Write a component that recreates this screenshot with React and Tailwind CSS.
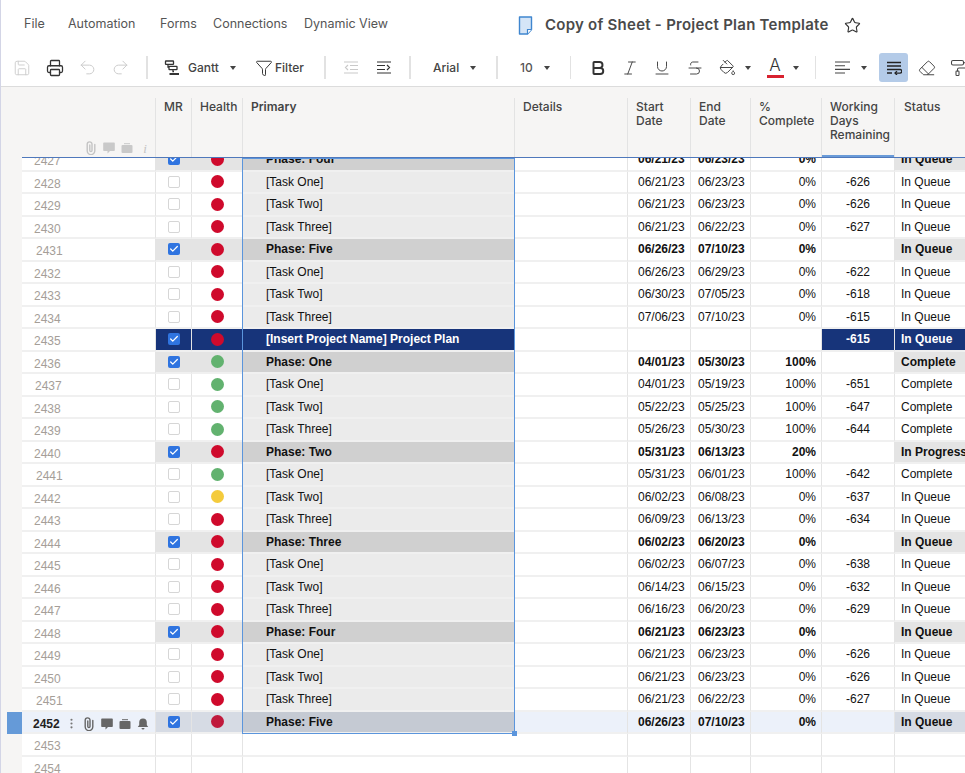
import React from 'react';
import { Save, Printer, Undo2, Redo2, Funnel, Bold, Italic, Underline, Strikethrough, PaintBucket, Eraser, PaintRoller, Star, EllipsisVertical, Check } from 'lucide-react';

const CARET = 'w-0 h-0 border-l-[3px] border-r-[3px] border-t-[4px] border-l-transparent border-r-transparent border-t-[#444]';

const R = '#cf0a2c';
const G = '#62b26f';
const Y = '#f4cb3c';

// num, title, start, end, pct, days, status, dot, kind
const rows = [
  [2427, 'Phase: Four', '06/21/23', '06/23/23', '0%', '', 'In Queue', R, 'phase'],
  [2428, '[Task One]', '06/21/23', '06/23/23', '0%', '-626', 'In Queue', R, 'task'],
  [2429, '[Task Two]', '06/21/23', '06/23/23', '0%', '-626', 'In Queue', R, 'task'],
  [2430, '[Task Three]', '06/21/23', '06/22/23', '0%', '-627', 'In Queue', R, 'task'],
  [2431, 'Phase: Five', '06/26/23', '07/10/23', '0%', '', 'In Queue', R, 'phase'],
  [2432, '[Task One]', '06/26/23', '06/29/23', '0%', '-622', 'In Queue', R, 'task'],
  [2433, '[Task Two]', '06/30/23', '07/05/23', '0%', '-618', 'In Queue', R, 'task'],
  [2434, '[Task Three]', '07/06/23', '07/10/23', '0%', '-615', 'In Queue', R, 'task'],
  [2435, '[Insert Project Name] Project Plan', '', '', '', '-615', 'In Queue', R, 'project'],
  [2436, 'Phase: One', '04/01/23', '05/30/23', '100%', '', 'Complete', G, 'phase'],
  [2437, '[Task One]', '04/01/23', '05/19/23', '100%', '-651', 'Complete', G, 'task'],
  [2438, '[Task Two]', '05/22/23', '05/25/23', '100%', '-647', 'Complete', G, 'task'],
  [2439, '[Task Three]', '05/26/23', '05/30/23', '100%', '-644', 'Complete', G, 'task'],
  [2440, 'Phase: Two', '05/31/23', '06/13/23', '20%', '', 'In Progress', R, 'phase'],
  [2441, '[Task One]', '05/31/23', '06/01/23', '100%', '-642', 'Complete', G, 'task'],
  [2442, '[Task Two]', '06/02/23', '06/08/23', '0%', '-637', 'In Queue', Y, 'task'],
  [2443, '[Task Three]', '06/09/23', '06/13/23', '0%', '-634', 'In Queue', R, 'task'],
  [2444, 'Phase: Three', '06/02/23', '06/20/23', '0%', '', 'In Queue', R, 'phase'],
  [2445, '[Task One]', '06/02/23', '06/07/23', '0%', '-638', 'In Queue', R, 'task'],
  [2446, '[Task Two]', '06/14/23', '06/15/23', '0%', '-632', 'In Queue', R, 'task'],
  [2447, '[Task Three]', '06/16/23', '06/20/23', '0%', '-629', 'In Queue', R, 'task'],
  [2448, 'Phase: Four', '06/21/23', '06/23/23', '0%', '', 'In Queue', R, 'phase'],
  [2449, '[Task One]', '06/21/23', '06/23/23', '0%', '-626', 'In Queue', R, 'task'],
  [2450, '[Task Two]', '06/21/23', '06/23/23', '0%', '-626', 'In Queue', R, 'task'],
  [2451, '[Task Three]', '06/21/23', '06/22/23', '0%', '-627', 'In Queue', R, 'task'],
  [2452, 'Phase: Five', '06/26/23', '07/10/23', '0%', '', 'In Queue', '#c01a3c', 'current'],
  [2453, '', '', '', '', '', '', null, 'empty'],
  [2454, '', '', '', '', '', '', null, 'empty'],
];

const shifted = [2431, 2441, 2451];

// the little glyphs that no package has in this shape
const GanttIcon = () => (
  <svg width="16" height="16" viewBox="0 0 16 16" fill="none" stroke="#333" strokeWidth="1.3">
    <rect x="1.5" y="1" width="8" height="3.4" rx="0.5" />
    <rect x="5" y="6.3" width="8" height="3.4" rx="0.5" />
    <path d="M4 4.4v2.6h1M9 9.7v2h1" />
    <path d="M5.5 14h9.5" strokeWidth="2" />
  </svg>
);

const IndentIcon = ({ color, back }) => (
  <svg width="14" height="13" viewBox="0 0 14 13" fill="none" stroke={color} strokeWidth="1.2">
    <path d="M0 1h14M0 12h14" />
    {back ? <path d="M6 4.500h8M6 8.500h8M4 4 1.500 6.500 4 9" /> : <path d="M0 4.500h8M0 8.500h8M10 4l2.500 2.500L10 9" />}
  </svg>
);

const WrapIcon = () => (
  <svg width="16" height="14" viewBox="0 0 16 14" fill="none" stroke="#222" strokeWidth="1.3">
    <path d="M1 1.5h14M1 5h14M1 8.5h13a1.8 1.8 0 0 1 0 3.6H9.5M1 12h5" />
    <path d="M11 10.2 9 12.1 11 14" />
  </svg>
);

const AlignIcon = () => (
  <svg width="15" height="13" viewBox="0 0 15 13" fill="none" stroke="#444" strokeWidth="1.1">
    <path d="M0 1h15M0 4.700h10M0 8.400h15M0 12h10" />
  </svg>
);

const SheetIcon = () => (
  <svg width="15" height="19" viewBox="0 0 15 19">
    <path d="M1.5 1h12v12.5L9.5 18h-8z" fill="#d5e5f7" stroke="#3f86cf" strokeWidth="1.4" strokeLinejoin="round" />
    <path d="M9.5 18v-4.500h4" fill="#fff" stroke="#3f86cf" strokeWidth="1.2" />
  </svg>
);

const ClipIcon = ({ color }) => (
  <svg width="10" height="14" viewBox="0 0 10 14" fill="none" stroke={color} strokeWidth="1.4" strokeLinecap="round">
    <path d="M8.800 3.500v6.300a3.800 3.800 0 0 1-7.600 0V3.300a2.400 2.400 0 0 1 4.800 0v6.200a1.100 1.100 0 0 1-2.200 0V4" />
  </svg>
);

const CommentIcon = ({ color }) => (
  <svg width="12" height="12" viewBox="0 0 12 12" fill={color}>
    <path d="M1 .5h10a.8.8 0 0 1 .8.8v6.900a.8.8 0 0 1-.8.8H7l-2.500 2.500V9H1a.8.8 0 0 1-.8-.8V1.300A.8.8 0 0 1 1 .5z" />
  </svg>
);

const CaseIcon = ({ color }) => (
  <svg width="12" height="12" viewBox="0 0 12 12" fill={color}>
    <path d="M3 1.200h6v1H3z" />
    <rect x="0.500" y="3" width="11" height="8" rx="1" />
  </svg>
);

const BellIcon = ({ color }) => (
  <svg width="12" height="12" viewBox="0 0 12 12" fill={color}>
    <path d="M6 .5a3.800 3.800 0 0 1 3.800 3.800V7l1.400 2H.800l1.400-2V4.300A3.800 3.800 0 0 1 6 .5zM4.500 10h3a1.500 1.500 0 0 1-3 0z" />
  </svg>
);

const Slot = ({ children }) => <div className="w-[18px] h-[14px] shrink-0 flex items-center justify-center">{children}</div>;

const Sep = ({ className }) => <div className={`h-[23px] bg-[#e2e2e2] shrink-0 ${className}`} />;
const Btn = ({ children, w = 'w-[33px]' }) => (
  <div className={`${w} h-[29px] shrink-0 flex items-center justify-center`}>{children}</div>
);
const Caret = ({ className }) => <div className={`${CARET} shrink-0 ${className}`} />;
const Label = ({ className, children }) => <span className={`text-[12px] font-medium text-[#444] shrink-0 ${className}`}>{children}</span>;

const Toolbar = () => (
  <div className="h-[40px] flex items-center pl-[4px] pt-[3px] shrink-0 overflow-hidden">
    <Btn><Save size={18} strokeWidth={1.3} color="#cfcfcf" /></Btn>
    <Btn><Printer size={18} strokeWidth={1.7} color="#333" /></Btn>
    <Btn><Undo2 size={19} strokeWidth={1.2} color="#c9c9c9" /></Btn>
    <Btn><Redo2 size={19} strokeWidth={1.2} color="#c9c9c9" /></Btn>
    <Sep className="ml-[9px] w-[2px]" />
    <div className="ml-[16px] shrink-0 flex"><GanttIcon /></div>
    <Label className="ml-[8px] w-[31px]">Gantt</Label>
    <Caret className="ml-[11px]" />
    <div className="ml-[19px] shrink-0 flex"><Funnel size={18} strokeWidth={1.3} color="#333" /></div>
    <Label className="ml-[2px] w-[29px]">Filter</Label>
    <Sep className="ml-[20px] w-[2px]" />
    <Btn w="w-[33px] ml-[8px]"><IndentIcon color="#c9c9c9" back /></Btn>
    <Btn><IndentIcon color="#333" /></Btn>
    <Sep className="ml-[9px] w-[2px]" />
    <Label className="ml-[22px] w-[27px]">Arial</Label>
    <Caret className="ml-[10px]" />
    <Sep className="ml-[20px] w-[2px]" />
    <Label className="ml-[22px] w-[15px] !text-[#555]">10</Label>
    <Caret className="ml-[9px]" />
    <Sep className="ml-[20px] w-[1px]" />
    <Btn w="w-[33px] ml-[10px]"><Bold size={18} strokeWidth={2.6} color="#333" /></Btn>
    <Btn w="w-[31px]"><Italic size={18} strokeWidth={1.3} color="#444" /></Btn>
    <Btn w="w-[33px]"><Underline size={18} strokeWidth={1.3} color="#444" /></Btn>
    <Btn w="w-[33px]"><Strikethrough size={18} strokeWidth={1.3} color="#444" /></Btn>
    <Btn w="w-[33px]"><PaintBucket size={17} strokeWidth={1.4} color="#444" /></Btn>
    <Caret className="ml-[1px]" />
    <div className="ml-[15px] shrink-0 w-[18px] flex flex-col items-center">
      <span className="text-[17px] leading-[15px] font-light text-[#333]">A</span>
      <div className="mt-[2px] w-[17px] h-[3px] bg-[#d8222f]" />
    </div>
    <Caret className="ml-[9px]" />
    <Sep className="ml-[16px] w-[1px]" />
    <div className="ml-[19px] shrink-0 flex"><AlignIcon /></div>
    <Caret className="ml-[11px]" />
    <div className="ml-[12px] w-[29px] h-[29px] shrink-0 rounded-[3px] bg-[#b4cbe8] flex items-center justify-center"><WrapIcon /></div>
    <Btn w="w-[33px] ml-[2px]"><Eraser size={18} strokeWidth={1.3} color="#444" /></Btn>
    <Btn w="w-[32px]"><PaintRoller size={18} strokeWidth={1.4} color="#444" /></Btn>
  </div>
);

const HeadCell = ({ w, children, active }) => (
  <div className={`${w} shrink-0 h-full border-l border-[#e3e3e3] pl-[8px] pt-[2px] text-[12px] leading-[14px] font-medium text-[#444] relative`}>
    {children}
    {active && <div className="absolute left-0 right-0 bottom-0 h-[3px] bg-[#6a9bd8]" />}
  </div>
);

const Header = () => (
  <div className="h-[72px] shrink-0 bg-[#f6f5f4] border-t border-[#dcdcdc] pt-[11px] relative">
    <div className="flex h-[60px]">
      <div className="w-[154px] shrink-0 relative">
        <div className="absolute right-[1px] bottom-[3px] flex items-center">
          <Slot><ClipIcon color="#c4c4c4" /></Slot>
          <Slot><CommentIcon color="#c9c9c9" /></Slot>
          <Slot><CaseIcon color="#c9c9c9" /></Slot>
          <Slot><span className="text-[13px] leading-[13px] italic text-[#c4c4c4] font-['Liberation_Serif',serif]">i</span></Slot>
        </div>
      </div>
      <HeadCell w="w-[36px]">MR</HeadCell>
      <HeadCell w="w-[51px]">Health</HeadCell>
      <HeadCell w="w-[272px]"><span className="font-semibold">Primary</span></HeadCell>
      <HeadCell w="w-[113px]">Details</HeadCell>
      <HeadCell w="w-[63px]">Start<br />Date</HeadCell>
      <HeadCell w="w-[60px]">End<br />Date</HeadCell>
      <HeadCell w="w-[71px]">%<br />Complete</HeadCell>
      <HeadCell w="w-[73px]" active>Working<br />Days<br />Remaining</HeadCell>
      <HeadCell w="w-[72px]"><span className="ml-[1px]">Status</span></HeadCell>
    </div>
    <div className="absolute left-[21px] right-0 bottom-0 h-[1px] bg-[#4f78bb]" />
  </div>
);

const numPadding = (num, current) => {
  if (current) return 'pl-[11px]';
  if (shifted.includes(num)) return 'pl-[14px]';
  if (num === 2437) return 'pl-[13px]';
  return 'pl-[12px]';
};

const Row = ({ row }) => {
  const [num, title, start, end, pct, days, status, dot, kind] = row;
  const phase = kind === 'phase';
  const project = kind === 'project';
  const current = kind === 'current';
  const empty = kind === 'empty';
  const strong = phase || project || current;

  // each cell colour depends on the kind of row
  let sideBg = 'bg-white';
  let primaryBg = empty ? 'bg-white' : 'bg-[#ebebeb]';
  let statusBg = 'bg-white';
  let daysBg = 'bg-white';
  let plainBg = 'bg-white';
  if (phase) {
    sideBg = 'bg-[#e4e4e4]';
    primaryBg = 'bg-[#d0d0d0]';
    statusBg = 'bg-[#e4e4e4]';
  }
  if (project) {
    sideBg = 'bg-[#17347a]';
    primaryBg = 'bg-[#17347a]';
    statusBg = 'bg-[#17347a]';
    daysBg = 'bg-[#17347a]';
  }
  if (current) {
    sideBg = 'bg-[#d6dbe4]';
    primaryBg = 'bg-[#c5cad3]';
    statusBg = 'bg-[#d6dbe4]';
    daysBg = 'bg-[#ecf1fa]';
    plainBg = 'bg-[#ecf1fa]';
  }

  const weight = strong ? 'font-bold' : 'font-normal';
  const cell = 'shrink-0 h-full flex items-center border-b-2 border-b-[#f0f0f0]';
  const line = 'border-r border-r-[#e4e4e4]';
  const text = project ? 'text-white' : 'text-[#111]';

  return (
    <div className="flex h-[22.5px] font-['Liberation_Sans',Arial,sans-serif] text-[12px] leading-[14px]">
      <div className="w-[21px] shrink-0 h-full flex justify-end">
        {current && <div className="w-[15px] h-full bg-[#659ad8]" />}
      </div>
      <div className={`${cell} ${line} w-[134px] pt-[4px] ${current ? 'bg-[#ecf1fa]' : 'bg-white'} ${numPadding(num, current)}`}>
        <span className={current ? 'w-[27px] font-bold text-[#222]' : 'text-[#a59e98]'}>{num}</span>
        {current && (
          <div className="flex items-center ml-[2px]">
            <Slot><EllipsisVertical size={13} color="#777" strokeWidth={2} /></Slot>
            <Slot><ClipIcon color="#666" /></Slot>
            <Slot><CommentIcon color="#666" /></Slot>
            <Slot><CaseIcon color="#666" /></Slot>
            <Slot><BellIcon color="#666" /></Slot>
          </div>
        )}
      </div>
      <div className={`${cell} ${line} w-[36px] justify-center ${sideBg}`}>
        {!empty && (
          <div className={`w-[12px] h-[12px] rounded-[2px] flex items-center justify-center ${strong ? 'bg-[#2f74e0]' : 'bg-white border border-[#d6d6d6]'}`}>
            {strong && <Check size={10} color="#fff" strokeWidth={3} />}
          </div>
        )}
      </div>
      <div className={`${cell} ${line} w-[51px] justify-center ${sideBg}`}>
        {dot && <div className="w-[13px] h-[13px] rounded-full" style={{ backgroundColor: dot }} />}
      </div>
      <div className={`${cell} w-[272px] pl-[23px] ${primaryBg} ${weight} ${text}`}>{title}</div>
      <div className={`${cell} ${line} w-[113px] ${plainBg}`} />
      <div className={`${cell} ${line} w-[63px] pl-[10px] ${plainBg} ${weight} text-[#111]`}>{start}</div>
      <div className={`${cell} ${line} w-[60px] pl-[7px] ${plainBg} ${weight} text-[#111]`}>{end}</div>
      <div className={`${cell} ${line} w-[71px] justify-end pr-[5px] ${plainBg} ${weight} text-[#111]`}>{pct}</div>
      <div className={`${cell} ${line} w-[73px] justify-center ${daysBg} ${weight} ${text}`}>{days}</div>
      <div className={`${cell} w-[72px] pl-[6px] whitespace-nowrap ${statusBg} ${weight} ${text}`}>{status}</div>
    </div>
  );
};

export default function App() {
  return (
    <div className="w-[965px] h-[773px] overflow-hidden flex flex-col bg-white border-l border-[#d3d5e6] font-['Inter',sans-serif]">
      <div className="h-[46px] shrink-0 flex items-center pl-[23px] pt-[2px] text-[12.5px] text-[#555]">
        <span className="w-[44px]">File</span>
        <span className="w-[92px]">Automation</span>
        <span className="w-[53px]">Forms</span>
        <span className="w-[91px]">Connections</span>
        <span className="w-[214px]">Dynamic View</span>
        <div className="mt-[2px] flex"><SheetIcon /></div>
        <span className="ml-[12px] mt-[2px] text-[15px] font-semibold text-[#4a4a4a] tracking-[0.25px] whitespace-nowrap">Copy of Sheet - Project Plan Template</span>
        <Star size={17} strokeWidth={1.6} color="#333" className="ml-[15px] mt-[3px] shrink-0" />
      </div>
      <Toolbar />
      <Header />
      <div className="flex-1 bg-[#f6f5f4] overflow-hidden relative">
        <div className="-mt-[9px]">
          {rows.map((r) => <Row key={r[0]} row={r} />)}
        </div>
        {/* selected range over the primary column */}
        <div className="absolute left-[241px] top-0 w-[273px] h-[576px] border border-[#5b95dc] pointer-events-none">
          <div className="absolute right-[-3px] bottom-[-3px] w-[5px] h-[5px] bg-[#5b95dc]" />
        </div>
      </div>
    </div>
  );
}
